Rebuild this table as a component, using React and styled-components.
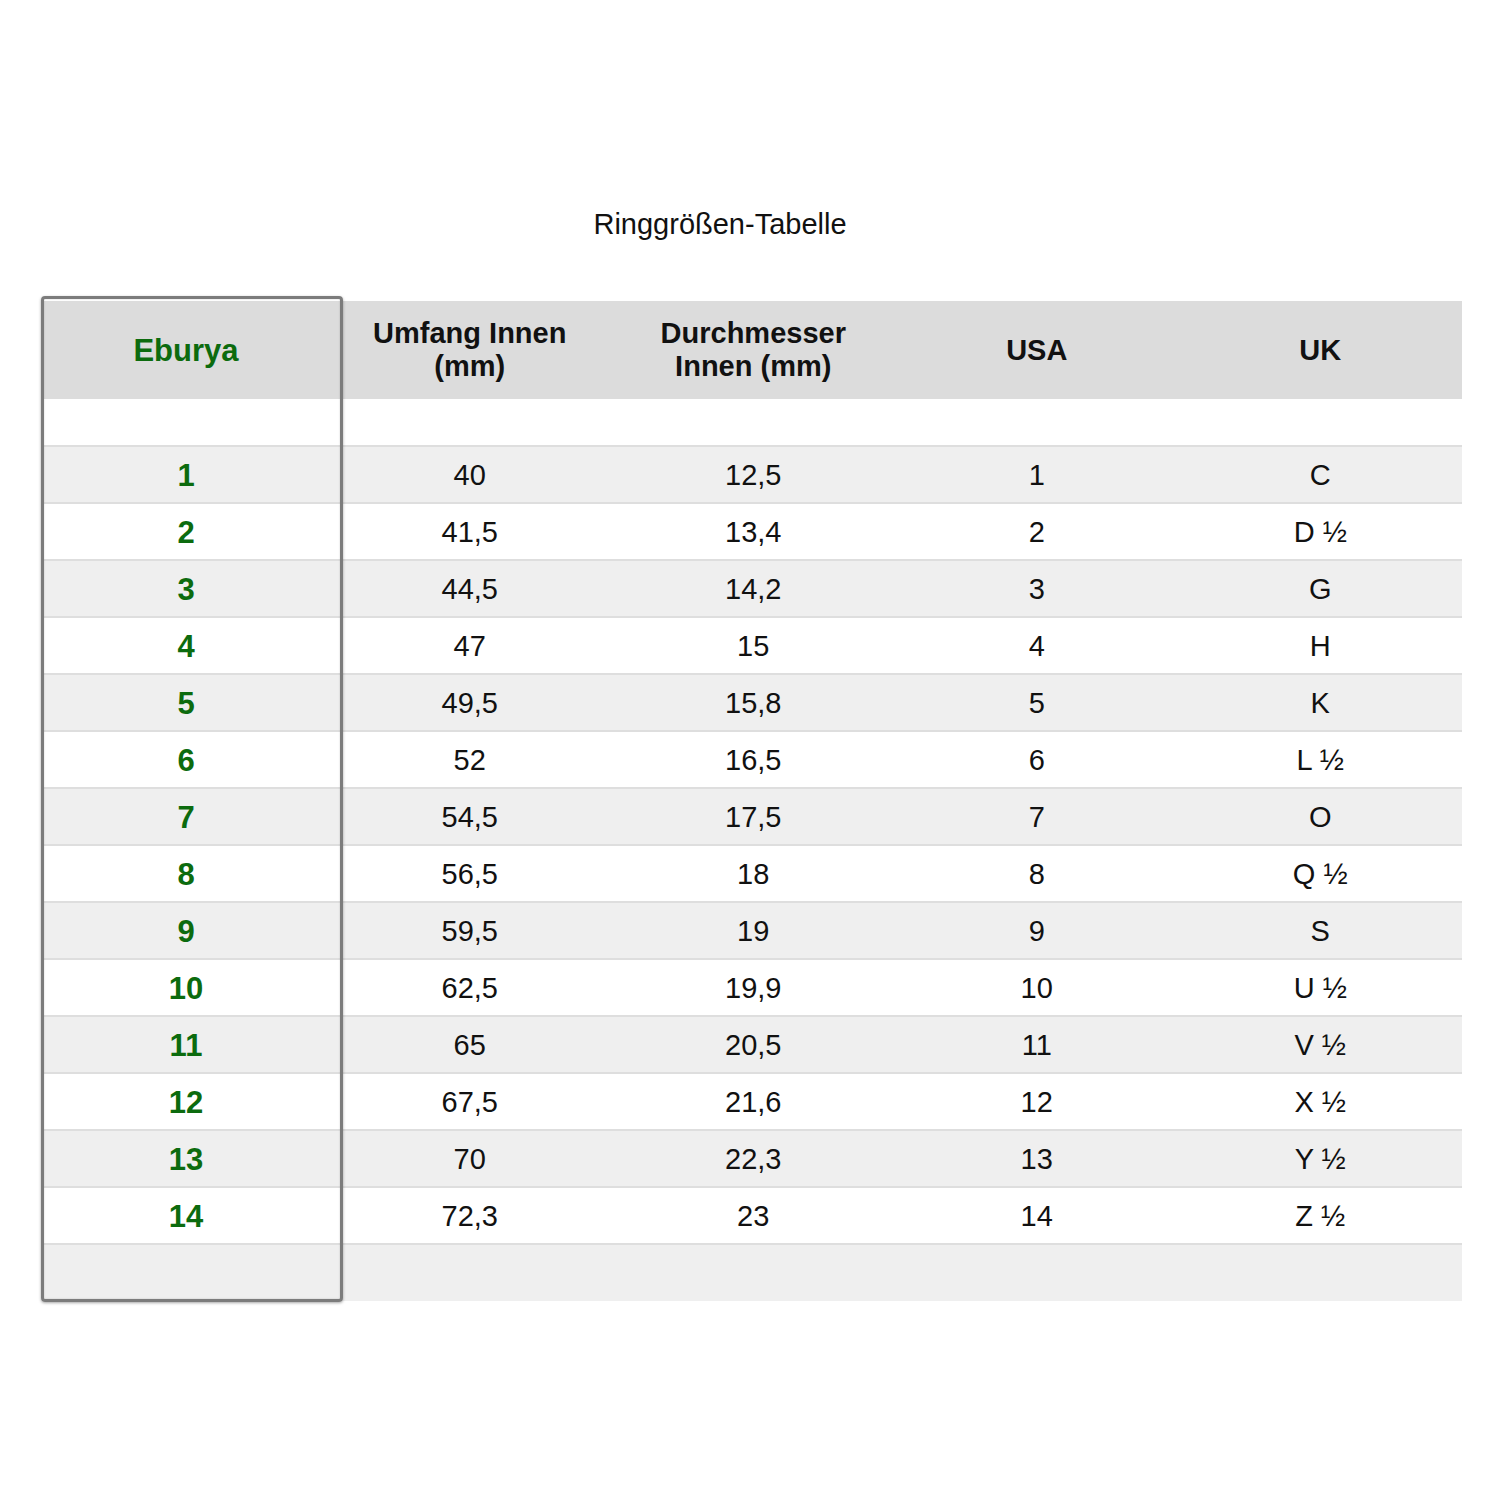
import React from "react";
import styled, { createGlobalStyle } from "styled-components";

const Global = createGlobalStyle`
  html, body { margin: 0; padding: 0; background: #fff; }
  body { font-family: "Liberation Sans", Arial, Helvetica, sans-serif; color: #111; }
`;

const Page = styled.div`
  width: 1500px;
  height: 1500px;
  padding: 207px 0 0 44px;
  box-sizing: border-box;
`;

const Title = styled.h1`
  width: 1352px;
  margin: 0 0 60px 0;
  text-align: center;
  font-weight: 400;
  font-size: 29px;
  line-height: 34px;
  color: #111;
`;

const TableWrap = styled.div`
  position: relative;
  width: 1418px;
`;

const Table = styled.table`
  width: 1418px;
  border-collapse: collapse;
  table-layout: fixed;
  font-size: 29px;
`;

const BrandCol = styled.col`
  width: 284px;
`;

const HeadRow = styled.tr`
  background: #dcdcdc;
  height: 98px;
`;

const Th = styled.th`
  font-weight: 700;
  line-height: 33px;
  text-align: center;
  vertical-align: middle;
  padding: 0;
  font-size: ${(p) => (p.$brand ? "31px" : "29px")};
  color: ${(p) => (p.$brand ? "#0c6b0e" : "#111")};
`;

const SpacerRow = styled.tr`
  height: 47px;
  background: #fff;
`;

const Row = styled.tr`
  height: 57px;
  background: ${(p) => (p.$shade ? "#efefef" : "#fff")};
  border-top: 2px solid #dedede;
`;

const Td = styled.td`
  text-align: center;
  vertical-align: middle;
  padding: 0;
  padding-top: 2px;
  font-weight: ${(p) => (p.$brand ? 700 : 400)};
  font-size: ${(p) => (p.$brand ? "31px" : "29px")};
  color: ${(p) => (p.$brand ? "#0c6b0e" : "#111")};
`;

const BrandFrame = styled.div`
  position: absolute;
  left: -3px;
  top: -5px;
  width: 302px;
  height: 1006px;
  box-sizing: border-box;
  border: 3px solid #7c7c7c;
  border-radius: 4px;
  box-shadow: 0 1px 3px rgba(0, 0, 0, 0.35), inset 0 0 2px rgba(0, 0, 0, 0.2);
  pointer-events: none;
`;

const rows = [
  ["1", "40", "12,5", "1", "C"],
  ["2", "41,5", "13,4", "2", "D ½"],
  ["3", "44,5", "14,2", "3", "G"],
  ["4", "47", "15", "4", "H"],
  ["5", "49,5", "15,8", "5", "K"],
  ["6", "52", "16,5", "6", "L ½"],
  ["7", "54,5", "17,5", "7", "O"],
  ["8", "56,5", "18", "8", "Q ½"],
  ["9", "59,5", "19", "9", "S"],
  ["10", "62,5", "19,9", "10", "U ½"],
  ["11", "65", "20,5", "11", "V ½"],
  ["12", "67,5", "21,6", "12", "X ½"],
  ["13", "70", "22,3", "13", "Y ½"],
  ["14", "72,3", "23", "14", "Z ½"],
];

export default function App() {
  return (
    <>
      <Global />
      <Page>
        <Title>Ringgrößen-Tabelle</Title>
        <TableWrap>
          <Table>
            <colgroup>
              <BrandCol />
              <col />
              <col />
              <col />
              <col />
            </colgroup>
            <thead>
              <HeadRow>
                <Th $brand>Eburya</Th>
                <Th>
                  Umfang Innen
                  <br />
                  (mm)
                </Th>
                <Th>
                  Durchmesser
                  <br />
                  Innen (mm)
                </Th>
                <Th>USA</Th>
                <Th>UK</Th>
              </HeadRow>
            </thead>
            <tbody>
              <SpacerRow>
                <td />
                <td />
                <td />
                <td />
                <td />
              </SpacerRow>
              {rows.map((r, i) => (
                <Row key={r[0]} $shade={i % 2 === 0}>
                  <Td $brand>{r[0]}</Td>
                  <Td>{r[1]}</Td>
                  <Td>{r[2]}</Td>
                  <Td>{r[3]}</Td>
                  <Td>{r[4]}</Td>
                </Row>
              ))}
              <Row $shade>
                <Td />
                <Td />
                <Td />
                <Td />
                <Td />
              </Row>
            </tbody>
          </Table>
          <BrandFrame />
        </TableWrap>
      </Page>
    </>
  );
}
